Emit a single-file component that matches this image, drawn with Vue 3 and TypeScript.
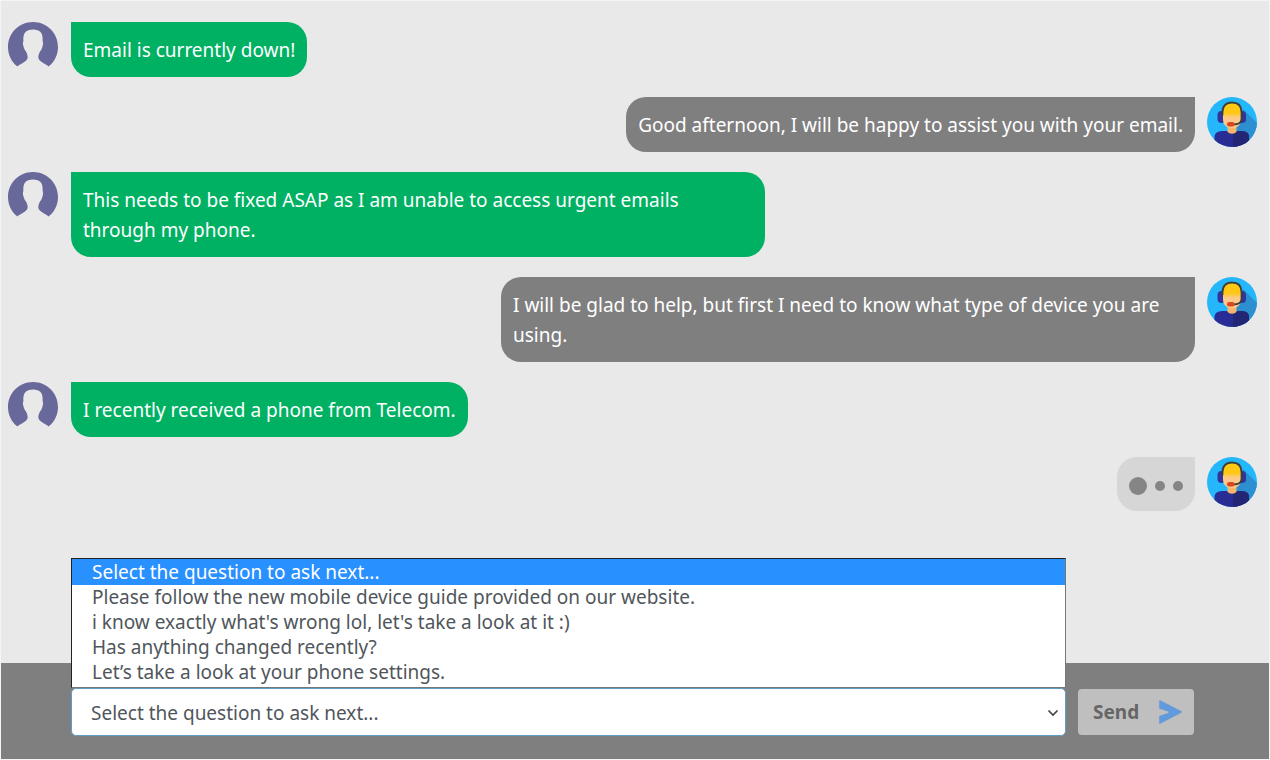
<script setup lang="ts">
import { ref } from 'vue'

interface Message {
  id: number
  from: 'customer' | 'agent'
  text: string
}

const messages: Message[] = [
  { id: 1, from: 'customer', text: 'Email is currently down!' },
  { id: 2, from: 'agent', text: 'Good afternoon, I will be happy to assist you with your email.' },
  { id: 3, from: 'customer', text: 'This needs to be fixed ASAP as I am unable to access urgent emails through my phone.' },
  { id: 4, from: 'agent', text: 'I will be glad to help, but first I need to know what type of device you are using.' },
  { id: 5, from: 'customer', text: 'I recently received a phone from Telecom.' },
  { id: 6, from: 'agent', text: '' },
]

const questions: string[] = [
  'Select the question to ask next...',
  'Please follow the new mobile device guide provided on our website.',
  "i know exactly what's wrong lol, let's take a look at it :)",
  'Has anything changed recently?',
  'Let’s take a look at your phone settings.',
]

const selected = ref(0)
const open = ref(true)

function choose(index: number) {
  selected.value = index
  open.value = false
}
</script>

<template>
  <div class="chat">
    <main class="messages">
      <div v-for="m in messages" :key="m.id" class="row" :class="m.from">
        <svg v-if="m.from === 'customer'" class="avatar" viewBox="0 0 50 50" role="img" aria-label="Customer">
          <path
            fill="#69689b"
            d="M9.500 44.500C3.500 40 0 33 0 25C0 11 11 0 25 0S50 11 50 25C50 33 46.500 40 40.500 44.500C38 42 33 40.500 31 37.500C29.600 35.500 30.500 32.500 32 29.500C33.200 28.500 33.800 26.500 34.500 24.500C35.300 22 35.200 20 34.600 19C35.300 11 32 7.500 25 7.500S14.700 11 15.400 19C14.800 20 14.700 22 15.500 24.500C16.200 26.500 16.800 28.500 18 29.500C19.500 32.500 20.400 35.500 19 37.500C17 40.500 12 42 9.500 44.500Z"
          />
        </svg>
        <div v-if="m.text" class="bubble">{{ m.text }}</div>
        <div v-else class="bubble typing" role="status" aria-label="Typing">
          <span class="dot large"></span><span class="dot"></span><span class="dot"></span>
        </div>
        <svg v-if="m.from === 'agent'" class="avatar" viewBox="0 0 50 50" role="img" aria-label="Agent">
          <defs>
            <clipPath :id="`disc-${m.id}`"><circle cx="25" cy="25" r="25" /></clipPath>
            <linearGradient :id="`face-${m.id}`" x1="0" y1="0" x2="0" y2="1">
              <stop offset="0.400" stop-color="#ffc814" />
              <stop offset="0.600" stop-color="#ffc98c" />
            </linearGradient>
          </defs>
          <g :clip-path="`url(#disc-${m.id})`">
            <rect width="50" height="50" fill="#25b7fc" />
            <path fill="#2c8fcf" d="M36 12L52 28V50H34L26 34Z" />
            <path fill="#292c94" d="M7.500 52V40C7.500 36 11 34 16 34H34C39 34 42 36 42 40V52Z" />
            <path fill="#222674" d="M26 34H34C39 34 42 36 42 40V52H26Z" />
            <path fill="#f7b56d" d="M20.500 28H29.500V34.500C28 37.500 22 37.500 20.500 34.500Z" />
            <rect x="10.500" y="14" width="8" height="12" rx="4" fill="#30349c" />
            <rect x="31" y="14" width="8" height="12" rx="4" fill="#30349c" />
            <path :fill="`url(#face-${m.id})`" d="M16 15C16 9 19.500 6 25 6S34 9 34 15V22C34 28 30.500 31 25 31S16 28 16 22Z" />
            <path fill="none" stroke="#3b4039" stroke-width="1.800" d="M15.500 18V15C15.500 9 19 5.500 25 5.500S34.500 9 34.500 15V22C34.500 26 32 27.500 26 27.500" />
            <rect x="20" y="25" width="7.500" height="4.500" rx="2.250" fill="#d9471c" />
          </g>
        </svg>
      </div>
    </main>

    <form class="composer" @submit.prevent>
      <div class="picker">
        <ul v-if="open" class="options" role="listbox" aria-label="Questions">
          <li
            v-for="(q, i) in questions"
            :key="q"
            role="option"
            :aria-selected="i === selected"
            :class="{ active: i === selected }"
            @click="choose(i)"
          >
            {{ q }}
          </li>
        </ul>
        <select v-model="selected" class="question" aria-label="Question to ask next">
          <option v-for="(q, i) in questions" :key="q" :value="i">{{ q }}</option>
        </select>
        <svg class="chevron" viewBox="0 0 12 8" aria-hidden="true">
          <path d="M1.500 1.500L6 6L10.500 1.500" fill="none" stroke="#444" stroke-width="1.700" />
        </svg>
      </div>
      <button class="send" type="submit">
        <span>Send</span>
        <svg class="plane" viewBox="0 0 26 26" aria-hidden="true">
          <path
            fill="#639adb"
            stroke="#639adb"
            stroke-width="1.500"
            stroke-linejoin="round"
            d="M2 1.500L24 13L2 24.500V17.500L11.500 14.500V12L2 9Z"
          />
        </svg>
      </button>
    </form>
  </div>
</template>

<style>
body {
  margin: 0;
}
</style>

<style scoped>
.chat {
  box-sizing: border-box;
  min-height: 100vh;
  display: flex;
  flex-direction: column;
  border: 1px solid #f1f5fa;
  background: #e9e9e9;
  font-family: Tahoma, "Noto Sans", sans-serif;
  font-size: 19px;
}

.messages {
  flex: 1;
  display: flex;
  flex-direction: column;
  gap: 20px;
  padding: 21px 12px 20px 7px;
}

.row {
  display: flex;
  align-items: flex-start;
  gap: 12px;
}

.row.customer {
  gap: 13px;
}

.row.agent {
  justify-content: flex-end;
}

.avatar {
  flex: none;
  width: 50px;
  height: 50px;
}

.bubble {
  box-sizing: border-box;
  max-width: 694px;
  padding: 13px 12px 12px;
  border-radius: 20px;
  line-height: 30px;
  color: #fff;
}

.customer .bubble {
  border-top-left-radius: 0;
  background: #00b163;
}

.agent .bubble {
  border-top-right-radius: 0;
  background: #7f7f7f;
}

.agent .typing {
  display: flex;
  align-items: center;
  gap: 8px;
  height: 54px;
  padding-top: 16px;
  background: #d6d6d6;
}

.dot {
  width: 10px;
  height: 10px;
  border-radius: 50%;
  background: #858585;
}

.dot.large {
  width: 18px;
  height: 18px;
}

.composer {
  display: flex;
  align-items: center;
  gap: 12px;
  padding: 25px 75px 23px 70px;
  background: #7f7f7f;
}

.picker {
  position: relative;
  flex: 1;
}

.question {
  display: block;
  box-sizing: border-box;
  width: 100%;
  height: 48px;
  padding: 2px 40px 0 19px;
  border: 1px solid #5f9dc6;
  border-radius: 5px;
  appearance: none;
  background: #fff;
  color: #50565b;
  font: inherit;
}

.chevron {
  position: absolute;
  top: 21px;
  right: 7px;
  width: 12px;
  height: 8px;
  pointer-events: none;
}

.options {
  position: absolute;
  right: 0;
  bottom: 100%;
  left: 0;
  z-index: 1;
  margin: 0;
  padding: 0 0 2px;
  border: 1px solid #777;
  border-top-color: #222;
  border-left-color: #222;
  list-style: none;
  background: #fff;
  color: #50565b;
  line-height: 25px;
}

.options li {
  padding: 0 20px;
}

.options li.active {
  padding-top: 1px;
  background: #2990ff;
  color: #fff;
}

.send {
  display: flex;
  align-items: center;
  justify-content: space-between;
  width: 116px;
  height: 46px;
  padding: 0 11px 0 15px;
  border: 0;
  border-radius: 4px;
  background: #bfbfbf;
  color: #666;
  font: inherit;
  font-weight: 700;
}

.plane {
  width: 25px;
  height: 26px;
}
</style>
